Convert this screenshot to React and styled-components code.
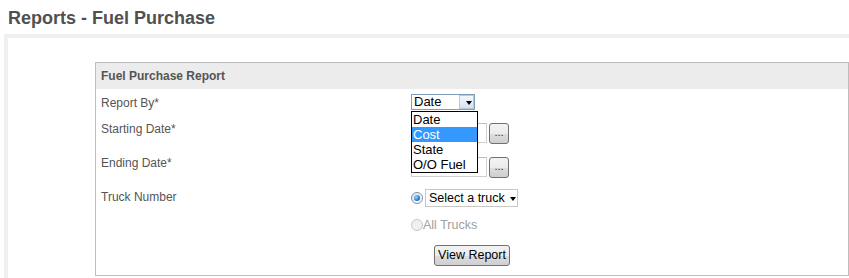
import React from "react";
import styled, { createGlobalStyle } from "styled-components";

const GlobalStyle = createGlobalStyle`
  html, body {
    margin: 0;
    padding: 0;
    background: #ffffff;
    overflow: hidden;
  }
  body {
    font-family: "Liberation Sans", Arial, sans-serif;
  }
`;

const reportOptions = ["Date", "Cost", "State", "O/O Fuel"];

const App = () => {
  return (
    <Page>
      <GlobalStyle />
      <Title>Reports - Fuel Purchase</Title>
      <Frame>
        <Panel>
          <PanelHeader>Fuel Purchase Report</PanelHeader>

          <Row height={27}>
            <Label top={6}>Report By*</Label>
            <Field top={5}>
              <Select>
                <SelectText>Date</SelectText>
                <ArrowBox>
                  <Caret />
                </ArrowBox>
              </Select>
              <ListBox>
                {reportOptions.map((opt) => (
                  <Option key={opt} selected={opt === "Cost"}>
                    {opt}
                  </Option>
                ))}
              </ListBox>
            </Field>
          </Row>

          <Row height={34}>
            <Label>Starting Date*</Label>
            <Field top={7}>
              <DateInput />
              <DotsButton>...</DotsButton>
            </Field>
          </Row>

          <Row height={34}>
            <Label>Ending Date*</Label>
            <Field top={7}>
              <DateInput />
              <DotsButton>...</DotsButton>
            </Field>
          </Row>

          <Row height={30}>
            <Label>Truck Number</Label>
            <Field top={5}>
              <Radio checked />
              <TruckSelect>
                Select a truck
                <Caret />
              </TruckSelect>
            </Field>
          </Row>

          <Row height={28}>
            <Label />
            <Field top={2}>
              <Radio disabled />
              <DisabledText>All Trucks</DisabledText>
            </Field>
          </Row>

          <Row height={29}>
            <Label />
            <Field top={3}>
              <ViewButton>View Report</ViewButton>
            </Field>
          </Row>
        </Panel>
      </Frame>
    </Page>
  );
};

const Page = styled.div`
  width: 849px;
  height: 278px;
  overflow: hidden;
`;

const Title = styled.h1`
  margin: 0;
  padding: 8px 0 6px 8px;
  font-size: 18px;
  line-height: 20px;
  font-weight: bold;
  color: #505050;
`;

const Frame = styled.div`
  margin-left: 4px;
  border-top: 4px solid #f0f0f0;
  border-left: 4px solid #f0f0f0;
  border-bottom: 4px solid #f0f0f0;
  padding: 24px 0 4px 87px;
`;

const Panel = styled.div`
  border: 1px solid #bdbdbd;
  background: #ffffff;
  padding-bottom: 4px;
`;

const PanelHeader = styled.div`
  height: 26px;
  line-height: 26px;
  background: #ececec;
  padding-left: 5px;
  font-size: 12px;
  font-weight: bold;
  color: #555555;
`;

const Row = styled.div`
  display: grid;
  grid-template-columns: 310px 1fr;
  height: ${(p) => p.height}px;
  padding-left: 5px;
`;

const Label = styled.div`
  padding-top: ${(p) => p.top ?? 5}px;
  font-size: 12px;
  line-height: 16px;
  color: #555555;
`;

const Field = styled.div`
  position: relative;
  display: flex;
  align-items: flex-start;
  padding-top: ${(p) => p.top}px;
`;

const Select = styled.div`
  display: flex;
  width: 64px;
  height: 16px;
  box-sizing: border-box;
  border: 1px solid #7f9db9;
  background: #ffffff;
`;

const SelectText = styled.span`
  flex: 1;
  padding-left: 2px;
  font-size: 13px;
  line-height: 14px;
  color: #000000;
`;

const ArrowBox = styled.span`
  display: flex;
  align-items: center;
  justify-content: center;
  width: 15px;
  height: 14px;
  box-sizing: border-box;
  border: 1px solid #b8cae0;
  background: linear-gradient(#f4f7fb, #d7e2ef);
`;

const Caret = styled.span`
  display: inline-block;
  width: 0;
  height: 0;
  border-left: 3.5px solid transparent;
  border-right: 3.5px solid transparent;
  border-top: 4px solid #000000;
  margin-left: 4px;
  margin-top: 1px;
`;

const ListBox = styled.div`
  position: absolute;
  top: 22px;
  left: 0;
  z-index: 2;
  width: 67px;
  box-sizing: border-box;
  border: 1px solid #000000;
  background: #ffffff;
`;

const Option = styled.div`
  height: 15px;
  line-height: 15px;
  padding-left: 1px;
  font-size: 13px;
  color: ${(p) => (p.selected ? "#ffffff" : "#000000")};
  background: ${(p) => (p.selected ? "#3399ff" : "#ffffff")};
`;

const DateInput = styled.div`
  width: 76px;
  height: 20px;
  box-sizing: border-box;
  border: 1px solid #d0d0d0;
  border-top-color: #bfbfbf;
  background: #ffffff;
`;

const DotsButton = styled.div`
  width: 20px;
  height: 21px;
  box-sizing: border-box;
  margin-left: 2px;
  border: 1px solid #707070;
  border-radius: 3px;
  background: linear-gradient(#f3f3f3 0%, #ebebeb 50%, #dddddd 51%, #cfcfcf 100%);
  font-size: 11px;
  line-height: 17px;
  text-align: center;
  color: #202060;
`;

const Radio = styled.span`
  position: relative;
  width: 12px;
  height: 12px;
  margin-top: 3px;
  margin-right: 2px;
  box-sizing: border-box;
  border-radius: 50%;
  border: 1px solid ${(p) => (p.disabled ? "#c8c8c8" : "#7a8ea8")};
  background: ${(p) =>
    p.disabled ? "#f0f0f0" : "linear-gradient(135deg, #dfe4ea, #ffffff)"};

  &::after {
    content: "";
    display: ${(p) => (p.checked ? "block" : "none")};
    position: absolute;
    left: 2px;
    top: 2px;
    width: 6px;
    height: 6px;
    border-radius: 50%;
    background: radial-gradient(circle at 35% 35%, #9fe0ff, #1a78c8 60%, #0b4f8f);
  }
`;

const TruckSelect = styled.div`
  display: flex;
  align-items: center;
  width: 93px;
  height: 18px;
  box-sizing: border-box;
  border: 1px solid #c8c8c8;
  padding-left: 3px;
  font-size: 12.5px;
  color: #000000;
  background: #ffffff;

  ${Caret} {
    margin-left: 5px;
  }
`;

const DisabledText = styled.span`
  font-size: 12.5px;
  line-height: 18px;
  color: #a0a0a0;
  margin-left: -2px;
`;

const ViewButton = styled.div`
  margin-left: 23px;
  width: 76px;
  height: 21px;
  box-sizing: border-box;
  border: 1px solid #707070;
  border-radius: 3px;
  background: linear-gradient(#f3f3f3 0%, #ebebeb 50%, #dddddd 51%, #cfcfcf 100%);
  font-size: 12.5px;
  line-height: 19px;
  text-align: center;
  color: #000000;
`;

export default App;
